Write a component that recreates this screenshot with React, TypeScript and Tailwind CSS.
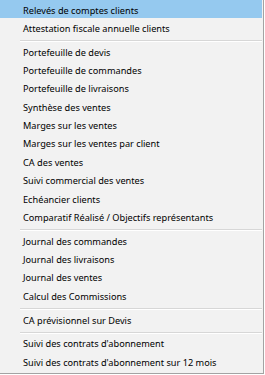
import React from "react";

const groups: string[][] = [
  ["Relevés de comptes clients", "Attestation fiscale annuelle clients"],
  [
    "Portefeuille de devis",
    "Portefeuille de commandes",
    "Portefeuille de livraisons",
    "Synthèse des ventes",
    "Marges sur les ventes",
    "Marges sur les ventes par client",
    "CA des ventes",
    "Suivi commercial des ventes",
    "Echéancier clients",
    "Comparatif Réalisé / Objectifs représentants",
  ],
  [
    "Journal des commandes",
    "Journal des livraisons",
    "Journal des ventes",
    "Calcul des Commissions",
  ],
  ["CA prévisionnel sur Devis"],
  ["Suivi des contrats d'abonnement", "Suivi des contrats d'abonnement sur 12 mois"],
];

function Row({ label, active }: { label: string; active?: boolean }) {
  return (
    <div
      className={
        "flex h-[18.35px] items-center pl-[23px] text-[9.2px] leading-none text-black whitespace-nowrap " +
        (active ? "bg-[#95c9ef]" : "")
      }
    >
      <span className="translate-y-[0.5px]">{label}</span>
    </div>
  );
}

function Separator() {
  return (
    <div className="flex h-[5.5px] flex-col justify-end pl-[20px]">
      <div className="h-px bg-[#d7d7d7]" />
      <div className="h-px bg-white" />
    </div>
  );
}

export default function App() {
  return (
    <div className="h-[375px] w-[265px] bg-white" style={{ fontFamily: '"Noto Sans", "Open Sans", sans-serif' }}>
      <div className="flex w-[264px] flex-col border-b border-r border-[#a3a3a3] bg-[#f2f2f2] pb-[2px] pr-[1px]">
        {groups.map((g, gi) => (
          <React.Fragment key={gi}>
            {gi > 0 && <Separator />}
            {g.map((label, i) => (
              <Row key={label} label={label} active={gi === 0 && i === 0} />
            ))}
          </React.Fragment>
        ))}
      </div>
    </div>
  );
}
